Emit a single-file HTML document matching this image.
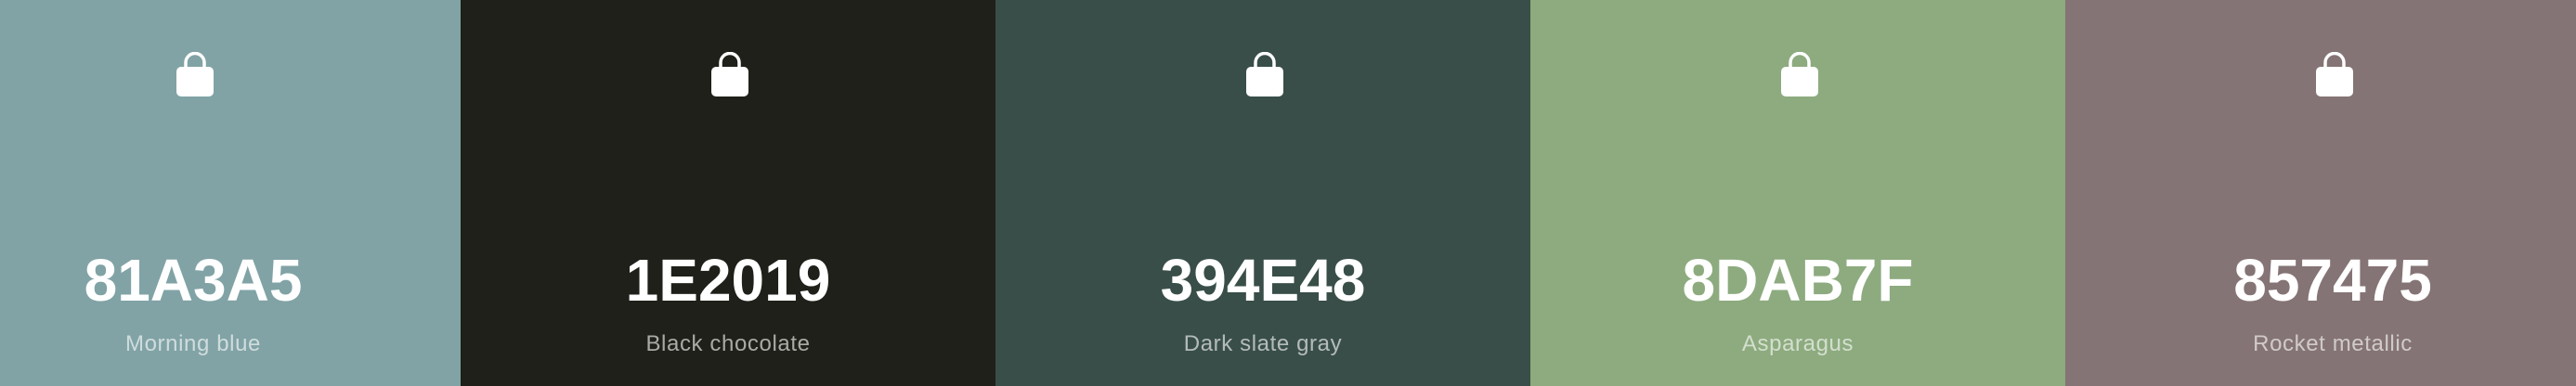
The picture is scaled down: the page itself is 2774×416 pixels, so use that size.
<!DOCTYPE html>
<html><head><style>
html,body{margin:0;padding:0;width:2774px;height:416px;overflow:hidden;}
.wrap{position:absolute;left:-80px;top:0;width:2880px;height:416px;display:flex;}
.c{width:576px;height:416px;position:relative;flex:none;font-family:"Liberation Sans",sans-serif;}
.lock{position:absolute;left:270px;top:56px;}
.hex{position:absolute;left:0;right:0;top:265px;text-align:center;color:#fff;font-weight:bold;font-size:64px;line-height:74px;letter-spacing:0;}
.name{position:absolute;left:0;right:0;top:357px;text-align:center;color:rgba(255,255,255,0.62);font-size:24px;line-height:28px;letter-spacing:0.6px;}
</style></head><body><div class="wrap">
<div class="c" style="background:#81A3A5"><svg class="lock" width="40" height="48" viewBox="0 0 40 48"><path d="M10 18V11.5a10 10 0 0 1 20 0V18" fill="none" stroke="#fff" stroke-width="3.5"/><rect x="0" y="16" width="40" height="32" rx="5" fill="#fff"/></svg><div class="hex">81A3A5</div><div class="name">Morning blue</div></div>
<div class="c" style="background:#1E2019"><svg class="lock" width="40" height="48" viewBox="0 0 40 48"><path d="M10 18V11.5a10 10 0 0 1 20 0V18" fill="none" stroke="#fff" stroke-width="3.5"/><rect x="0" y="16" width="40" height="32" rx="5" fill="#fff"/></svg><div class="hex">1E2019</div><div class="name">Black chocolate</div></div>
<div class="c" style="background:#394E48"><svg class="lock" width="40" height="48" viewBox="0 0 40 48"><path d="M10 18V11.5a10 10 0 0 1 20 0V18" fill="none" stroke="#fff" stroke-width="3.5"/><rect x="0" y="16" width="40" height="32" rx="5" fill="#fff"/></svg><div class="hex">394E48</div><div class="name">Dark slate gray</div></div>
<div class="c" style="background:#8DAB7F"><svg class="lock" width="40" height="48" viewBox="0 0 40 48"><path d="M10 18V11.5a10 10 0 0 1 20 0V18" fill="none" stroke="#fff" stroke-width="3.5"/><rect x="0" y="16" width="40" height="32" rx="5" fill="#fff"/></svg><div class="hex">8DAB7F</div><div class="name">Asparagus</div></div>
<div class="c" style="background:#857475"><svg class="lock" width="40" height="48" viewBox="0 0 40 48"><path d="M10 18V11.5a10 10 0 0 1 20 0V18" fill="none" stroke="#fff" stroke-width="3.5"/><rect x="0" y="16" width="40" height="32" rx="5" fill="#fff"/></svg><div class="hex">857475</div><div class="name">Rocket metallic</div></div>
</div></body></html>
